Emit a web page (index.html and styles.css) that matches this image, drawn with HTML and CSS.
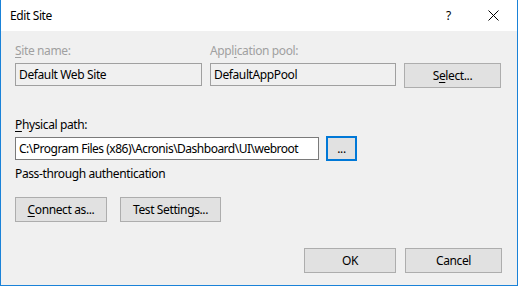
FILE: index.html
```html
<!DOCTYPE html>
<html>
<head>
<meta charset="utf-8">
<link rel="stylesheet" href="styles.css">
</head>
<body>
<div class="window">
  <div class="titlebar">
    <span class="title">Edit Site</span>
    <span class="help">?</span>
    <span class="close">
      <svg width="11" height="11" viewBox="0 0 11 11"><path d="M0.5 0.5 L10.5 10.5 M10.5 0.5 L0.5 10.5" stroke="#000" stroke-width="1" fill="none"/></svg>
    </span>
  </div>
  <div class="content">
    <div class="row-top">
      <div class="field f-site">
        <div class="label disabled"><u>S</u>ite name:</div>
        <div class="textbox readonly">Default Web Site</div>
      </div>
      <div class="field f-pool">
        <div class="label disabled">Appl<u>i</u>cation pool:</div>
        <div class="textbox readonly">DefaultAppPool</div>
      </div>
      <div class="field f-select">
        <button class="btn btn-select">S<u>e</u>lect...</button>
      </div>
    </div>

    <div class="label label-path"><u>P</u>hysical path:</div>
    <div class="row-path">
      <div class="textbox path">C:\Program Files (x86)\Acronis\Dashboard\UI\webroot</div>
      <button class="btn btn-browse">...</button>
    </div>

    <div class="auth">Pass-through authentication</div>

    <div class="row-auth">
      <button class="btn btn-connect"><u>C</u>onnect as...</button>
      <button class="btn btn-test">Test Settin<u>g</u>s...</button>
    </div>

    <div class="row-footer">
      <button class="btn btn-ok">OK</button>
      <button class="btn btn-cancel">Cancel</button>
    </div>
  </div>
</div>
</body>
</html>
```

FILE: styles.css
```css
* { box-sizing: border-box; }
html, body {
  margin: 0;
  padding: 0;
  width: 518px;
  height: 286px;
  overflow: hidden;
  font-family: "Noto Sans", "Open Sans", sans-serif;
  font-size: 12px;
  letter-spacing: -0.38px;
  color: #000;
}
.window {
  width: 518px;
  height: 286px;
  border-left: 1px solid #1a82d8;
  border-right: 1px solid #1a82d8;
  border-bottom: 1px solid #1a82d8;
  background: #f0f0f0;
  display: flex;
  flex-direction: column;
}
.titlebar {
  height: 31px;
  background: #fff;
  display: flex;
  align-items: center;
  padding-left: 9px;
}
.title {
  flex: 1;
  line-height: 16px;
}
.help {
  width: 8px;
  margin-right: 34px;
  line-height: 16px;
}
.close {
  width: 11px;
  margin-right: 18px;
  display: flex;
}
.content {
  flex: 1;
  padding: 12px 15px 0 14px;
  display: flex;
  flex-direction: column;
}
.label {
  line-height: 16px;
  white-space: nowrap;
}
.label.disabled { color: #a0a0a0; }
.row-top {
  display: grid;
  grid-template-columns: 187px 186px 97px;
  column-gap: 8px;
  align-items: end;
}
.field {
  display: flex;
  flex-direction: column;
  gap: 4px;
}
.textbox {
  height: 23px;
  border: 1px solid #7a7a7a;
  background: #fff;
  padding: 0 3px;
  line-height: 21px;
  white-space: nowrap;
  overflow: hidden;
}
.textbox.readonly {
  background: #f0f0f0;
  border-color: #a0a0a0;
}
.path { letter-spacing: -0.5px; }
.btn {
  font: inherit;
  letter-spacing: inherit;
  color: #000;
  height: 25px;
  border: 1px solid #adadad;
  background: #e1e1e1;
  padding: 0;
  margin: 0;
  line-height: 21px;
  text-align: center;
}
.btn-select { width: 97px; margin-bottom: -2px; }
.label-path { margin-top: 31px; }
.row-path {
  margin-top: 3px;
  display: flex;
  align-items: center;
  gap: 7px;
}
.path { width: 304px; }
.btn-browse {
  width: 31px;
  border: 2px solid #0078d7;
}
.auth {
  margin-top: 5px;
  line-height: 16px;
}
.row-auth {
  margin-top: 15px;
  display: flex;
  gap: 13px;
}
.btn-connect { width: 92px; }
.btn-test { width: 101px; }
.row-footer {
  margin-top: 26px;
  display: flex;
  justify-content: flex-end;
  gap: 9px;
}
.btn-ok { width: 92px; }
.btn-cancel { width: 97px; }
u { text-decoration: underline; text-underline-offset: 2px; }
```
